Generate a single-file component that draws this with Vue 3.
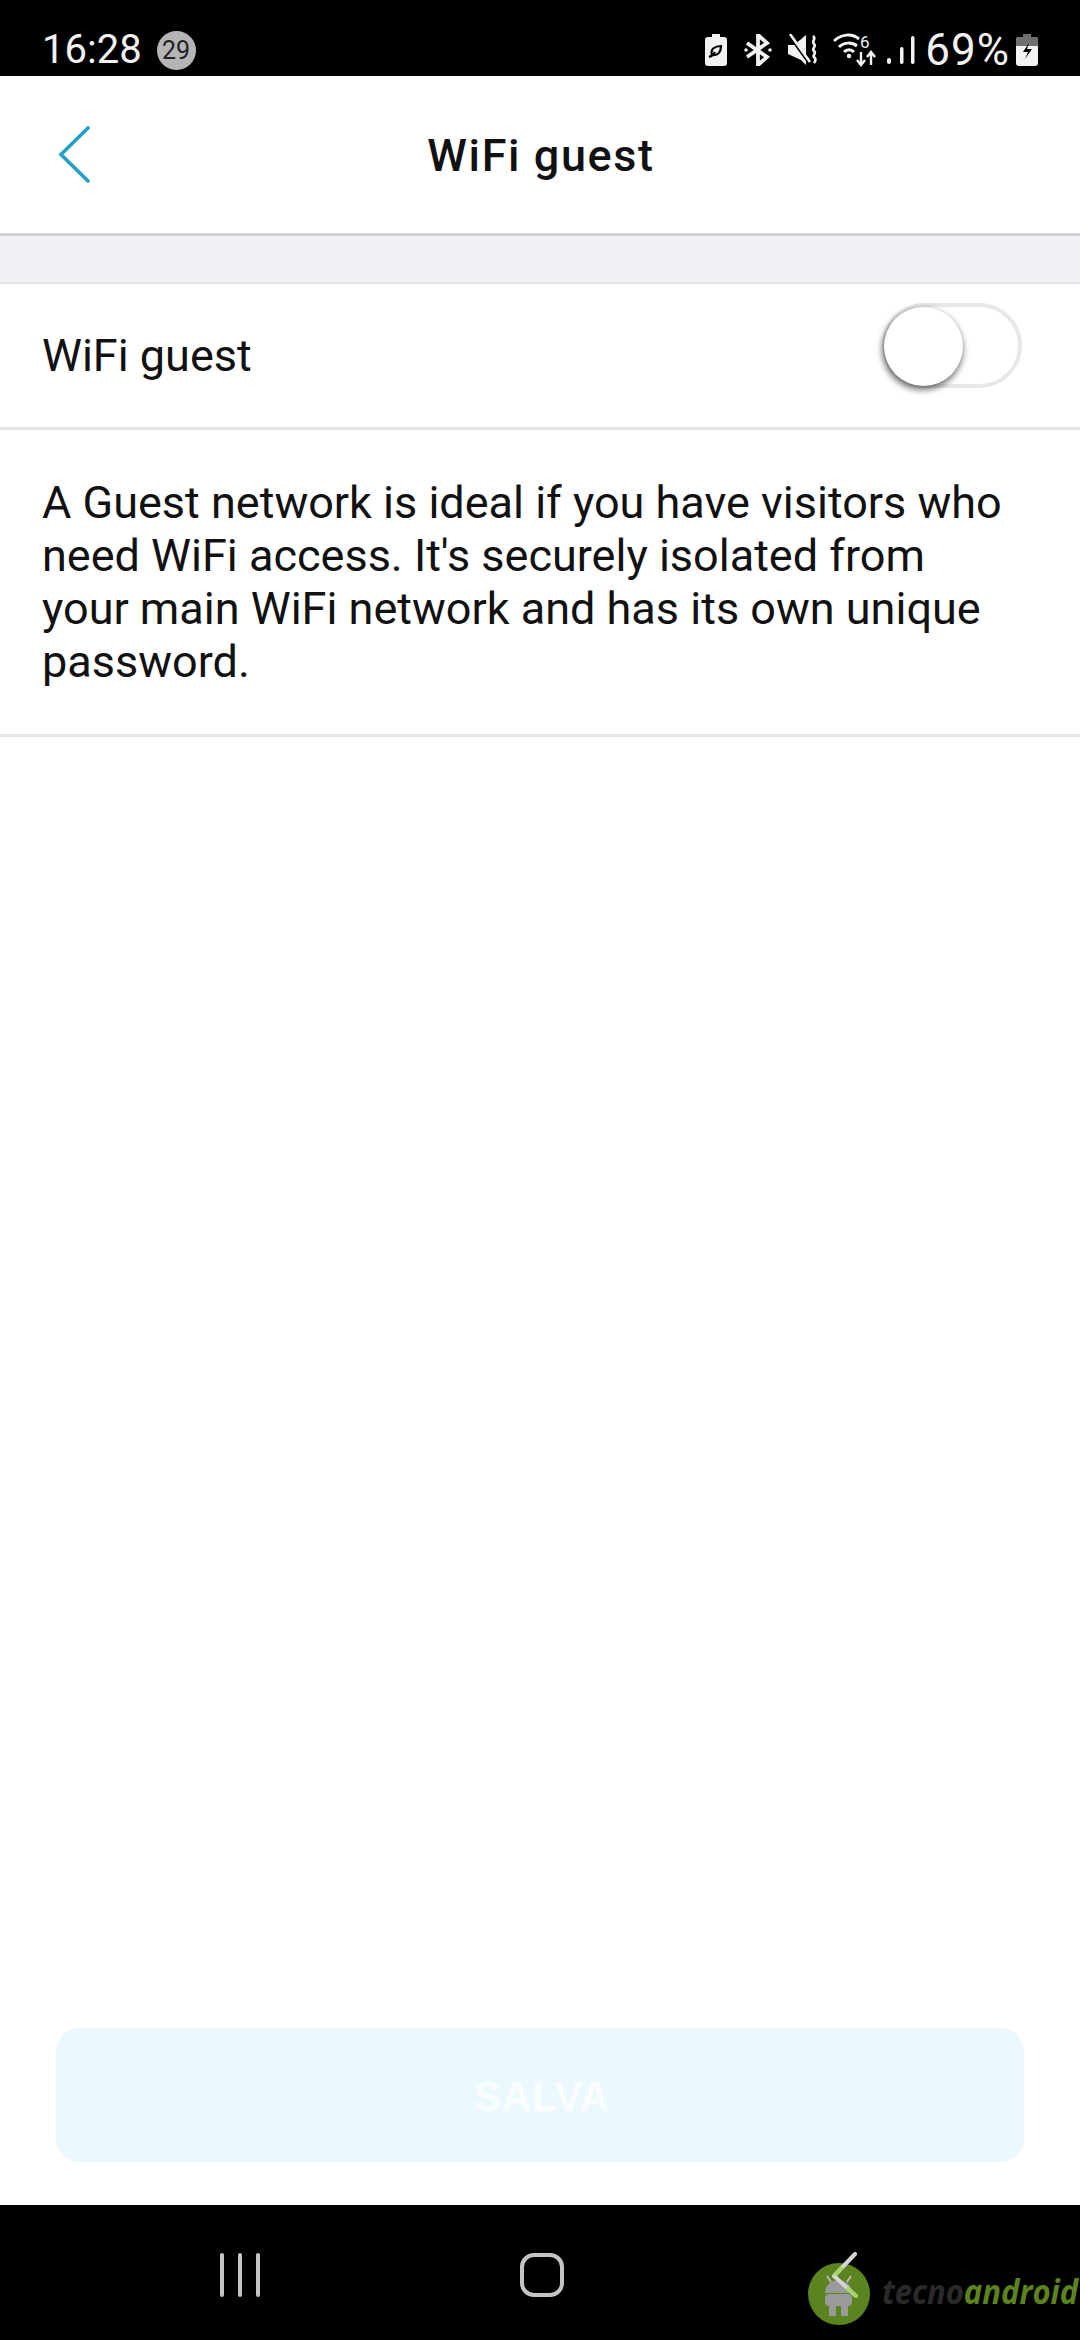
<script setup>
const description = "A Guest network is ideal if you have visitors who need WiFi access. It's securely isolated from your main WiFi network and has its own unique password.";
</script>

<template>
  <main class="screen">
    <div class="status-bar">
      <div class="status-left">
        <span class="clock">16:28</span>
        <span class="badge">29</span>
      </div>
      <div class="status-right">
        <svg class="ic" width="22" height="32" viewBox="0 0 22 32">
          <path d="M7 0h8v3h4a3 3 0 0 1 3 3v23a3 3 0 0 1-3 3H3a3 3 0 0 1-3-3V6a3 3 0 0 1 3-3h4z" fill="#f2f2f2" />
          <path d="M4 23c3-1 5-3 6-5M7 21c-2-6 3-9 9-9 0 6-3 10-9 9z" fill="none" stroke="#000" stroke-width="2.2" />
        </svg>
        <svg class="ic bt" width="28" height="32" viewBox="0 0 28 32">
          <path d="M3 9l20 14-9 8V1l9 8L3 23" fill="none" stroke="#f2f2f2" stroke-width="3.8" />
          <circle cx="2" cy="16" r="1.8" fill="#f2f2f2" />
          <circle cx="26" cy="16" r="1.8" fill="#f2f2f2" />
        </svg>
        <svg class="ic mute" width="30" height="32" viewBox="0 0 30 32">
          <path d="M0 11h6L18 1v30L13 26 0 20z" fill="#f2f2f2" />
          <path d="M1 1l20 28" stroke="#000" stroke-width="3" />
          <path d="M2 0l20 28" stroke="#f2f2f2" stroke-width="2.6" />
          <path d="M25 2c4 3-2 5 1 8s-3 4 0 7-2 4 0 6 2 3 0 6" fill="none" stroke="#f2f2f2" stroke-width="2.6" />
        </svg>
        <svg class="ic wifi" width="44" height="34" viewBox="0 0 44 34">
          <path d="M1 8c7-7 18-8 25-2M6 14c5-5 13-5 18-1M11 19c3-3 7-3 10 0" fill="none" stroke="#f2f2f2" stroke-width="3" />
          <circle cx="16" cy="23" r="2.2" fill="#f2f2f2" />
          <path d="M28 32V19M24 27l4 5 4-5M38 32V20M34 24l4-5 4 5" fill="none" stroke="#f2f2f2" stroke-width="2.4" />
          <text x="27" y="15" class="six">6</text>
        </svg>
        <svg class="ic signal" width="28" height="30" viewBox="0 0 28 30">
          <rect x="0" y="23" width="4" height="6" rx="2" fill="#f2f2f2" />
          <rect x="13" y="12" width="3.5" height="17" rx="1.7" fill="#f2f2f2" />
          <rect x="24" y="1" width="3.5" height="28" rx="1.7" fill="#f2f2f2" />
        </svg>
        <span class="pct">69%</span>
        <svg class="ic batt" width="22" height="32" viewBox="0 0 22 32">
          <path d="M7 0h8v3h4a3 3 0 0 1 3 3v23a3 3 0 0 1-3 3H3a3 3 0 0 1-3-3V6a3 3 0 0 1 3-3h4z" fill="#f2f2f2" />
          <path d="M7 0h8v3h4a3 3 0 0 1 3 3v6H0V6a3 3 0 0 1 3-3h4z" fill="#707070" />
          <path d="M13 9l-6 9h5l-3 7 7-10h-5z" fill="#000" />
        </svg>
      </div>
    </div>

    <header class="topbar">
      <button class="back" aria-label="back">
        <svg width="32" height="58" viewBox="0 0 32 58">
          <path d="M30 2L3 28.5 30 55" fill="none" stroke="#22a0c8" stroke-width="3.6" stroke-linecap="round" stroke-linejoin="miter" />
        </svg>
      </button>
      <h1>WiFi guest</h1>
    </header>

    <div class="band"></div>

    <section class="row">
      <span>WiFi guest</span>
      <div class="switch"><div class="knob"></div></div>
    </section>

    <section class="desc">
      <p>{{ description }}</p>
    </section>

    <div class="spacer"></div>

    <div class="footer">
      <button class="save">SALVA</button>
    </div>

    <nav class="navbar">
      <svg class="nav-recent" width="44" height="44" viewBox="0 0 44 44">
        <path d="M4 2v40M22 2v40M40 2v40" stroke="#c4c4c4" stroke-width="4" stroke-linecap="round" />
      </svg>
      <div class="nav-home"></div>
      <div class="nav-back">
        <svg class="mark" width="64" height="74" viewBox="0 0 64 74">
          <circle cx="32" cy="42" r="31" fill="#5b8420" />
          <path d="M18 41a13.5 13 0 0 1 27 0z" fill="#9a9a9a" />
          <rect x="18" y="42" width="27" height="12" rx="4" fill="#9a9a9a" />
          <rect x="22" y="54" width="7" height="10" fill="#9a9a9a" />
          <rect x="34" y="54" width="7" height="10" fill="#9a9a9a" />
          <path d="M20 24l4 6M44 24l-4 6" stroke="#b9b9b9" stroke-width="2" />
          <path d="M48 2L27 24" stroke="#d5d5d5" stroke-width="4" stroke-linecap="round" />
          <path d="M35 15L27 24" stroke="#a5d46a" stroke-width="4" />
          <path d="M27 24L49 44" stroke="#d5d5d5" stroke-width="4" />
          <path d="M41 37L49 44" stroke="#a5d46a" stroke-width="4" stroke-linecap="round" />
        </svg>
        <span class="wm"><span class="wm-a">tecno</span><span class="wm-b">android</span></span>
      </div>
    </nav>
  </main>
</template>

<style scoped>
.screen {
  width: 1080px;
  height: 2340px;
  display: flex;
  flex-direction: column;
  background: #fff;
  font-family: Roboto, "Liberation Sans", sans-serif;
  color: #111;
  overflow: hidden;
}
.status-bar {
  height: 76px;
  background: #000;
  color: #f2f2f2;
  display: flex;
  align-items: center;
  justify-content: space-between;
  padding: 24px 42px 0 42px;
  box-sizing: border-box;
}
.status-left {
  display: flex;
  align-items: center;
  gap: 15px;
}
.clock {
  font-size: 40px;
  line-height: 48px;
}
.badge {
  width: 39px;
  height: 39px;
  border-radius: 50%;
  background: #b5b5b5;
  color: #222;
  font-size: 25px;
  display: flex;
  align-items: center;
  justify-content: center;
}
.status-right {
  display: flex;
  align-items: center;
}
.ic {
  flex: none;
}
.bt {
  margin-left: 17px;
}
.mute {
  margin-left: 16px;
}
.wifi {
  margin-left: 15px;
}
.signal {
  margin-left: 10px;
}
.pct {
  font-size: 44px;
  line-height: 48px;
  letter-spacing: 1px;
  margin-left: 10px;
}
.batt {
  margin-left: 6px;
}
.six {
  font-size: 17px;
  fill: #f2f2f2;
  font-family: Roboto, sans-serif;
}
.topbar {
  height: 157px;
  flex: none;
  display: flex;
  align-items: center;
  justify-content: center;
  position: relative;
  border-bottom: 3px solid #d0d2d6;
  box-sizing: content-box;
}
.topbar h1 {
  margin: 2px 0 0 2px;
  font-size: 45px;
  font-weight: 500;
  letter-spacing: 1.6px;
  color: #111;
}
.back {
  position: absolute;
  left: 58px;
  top: 50px;
  padding: 0;
  border: 0;
  background: none;
  display: flex;
}
.band {
  height: 46px;
  flex: none;
  background: #eff1f5;
  border-bottom: 2px solid #dfe2e5;
}
.row {
  height: 143px;
  flex: none;
  display: flex;
  align-items: center;
  justify-content: space-between;
  padding: 0 58px 0 42px;
  border-bottom: 3px solid #e4e5e7;
  box-sizing: content-box;
  font-size: 45px;
}
.switch {
  width: 132px;
  height: 77px;
  border: 4px solid #e8e8e8;
  border-radius: 45px;
  position: relative;
  box-sizing: content-box;
  margin-bottom: 20px;
}
.knob {
  position: absolute;
  left: -2px;
  top: 0;
  width: 79px;
  height: 79px;
  border-radius: 50%;
  background: #fff;
  box-shadow: -1px 3px 6px 1px rgba(0, 0, 0, 0.55);
}
.desc {
  height: 304px;
  flex: none;
  padding: 0 42px;
  border-bottom: 3px solid #e4e5e7;
  box-sizing: content-box;
}
.desc p {
  margin: 0;
  padding-top: 46px;
  font-size: 45px;
  line-height: 53px;
  width: 972px;
}
.spacer {
  flex: 1;
}
.footer {
  flex: none;
  padding: 0 56px 43px;
}
.save {
  display: block;
  width: 100%;
  height: 134px;
  border: 0;
  border-radius: 24px;
  background: #ebf8fe;
  color: #fafdff;
  font-family: "Liberation Sans", Arial, sans-serif;
  font-size: 42px;
  font-weight: 700;
  padding: 4px 0 0 3px;
}
.navbar {
  height: 135px;
  flex: none;
  background: #000;
  position: relative;
  display: flex;
  align-items: center;
  padding-left: 218px;
  box-sizing: border-box;
}
.nav-recent {
  margin-top: 5px;
}
.nav-home {
  width: 36px;
  height: 36px;
  border: 4px solid #c4c4c4;
  border-radius: 14px;
  margin-left: 258px;
  margin-top: 5px;
}
.nav-back {
  position: absolute;
  left: 807px;
  top: 0;
  display: flex;
  align-items: flex-start;
}
.mark {
  margin-top: 47px;
  flex: none;
}
.wm {
  display: inline-block;
  font-family: "Open Sans", sans-serif;
  font-size: 31px;
  font-weight: 700;
  font-style: italic;
  margin-left: 11px;
  margin-top: 64px;
  line-height: 44px;
  white-space: nowrap;
  transform: scaleY(1.12);
}
.wm-a {
  color: #2a2a2a;
}
.wm-b {
  color: #5b8420;
}
</style>

<style>
html,
body {
  margin: 0;
  background: #fff;
}
</style>
